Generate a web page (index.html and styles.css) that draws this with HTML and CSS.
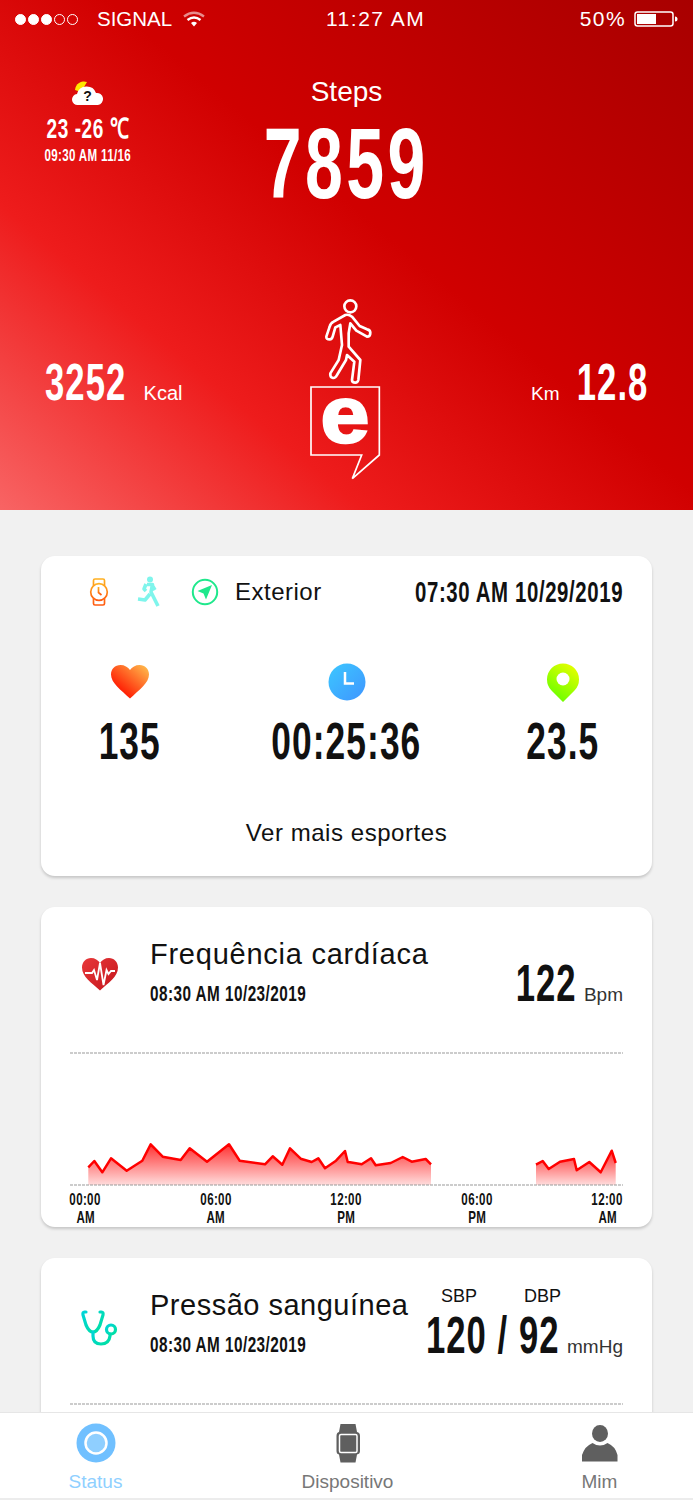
FILE: index.html
```html
<!DOCTYPE html>
<html lang="en">
<head>
    <meta charset="UTF-8">
    <meta name="viewport" content="width=device-width, initial-scale=1.0">
    <title>Status</title>
    <link rel="stylesheet" href="styles.css">
</head>
<body>
<div class="app">
    <section class="hero">
        <div class="statusbar">
            <div class="status-left">
                <div class="dots"><i class="on"></i><i class="on"></i><i class="on"></i><i></i><i></i></div>
                <span class="carrier">SIGNAL</span>
                <svg class="wifi" width="24" height="18" viewBox="0 0 24 18"><path d="M2 6.5Q12 -1 22 6.5" fill="none" stroke="#fff" stroke-opacity=".55" stroke-width="2.4"/><path d="M5.5 10Q12 4.800 18.500 10" fill="none" stroke="#fff" stroke-width="2.400"/><path d="M9 13Q12 10.500 15 13L12 16.500Z" fill="#fff"/></svg>
            </div>
            <span class="clock">11:27 AM</span>
            <div class="status-right">
                <span>50%</span>
                <svg width="44" height="16" viewBox="0 0 44 16"><rect x="1" y="1" width="38" height="14" rx="2.500" fill="none" stroke="#fff" stroke-width="1.500"/><rect x="3" y="3" width="19" height="10" fill="#fff"/><path d="M41 5.500a2.500 2.500 0 0 1 0 5z" fill="#fff"/></svg>
            </div>
        </div>

        <div class="hero-top">
            <div class="weather">
                <svg width="34" height="26" viewBox="0 0 34 26"><path d="M4 10a9 9 0 0 1 12-8L10 12z" fill="#ffe600"/><path d="M7 25a5.500 5.500 0 0 1-1-11 10 10 0 0 1 19-1 6 6 0 0 1 2 12z" fill="#fff"/><text x="16.500" y="21" class="weather-q">?</text></svg>
                <div class="weather-temp"><span class="din">23 -26 ℃</span></div>
                <div class="weather-time"><span class="din">09:30 AM 11/16</span></div>
            </div>
            <div class="steps">
                <div class="steps-label">Steps</div>
                <div class="steps-value"><span class="din">7859</span></div>
            </div>
        </div>

        <div class="hero-bottom">
            <div class="hero-stat">
                <span class="din stat-num left">3252</span>
                <span class="stat-unit kcal">Kcal</span>
            </div>
            <svg class="logo" width="130" height="210" viewBox="5 0 390 630">
                <circle cx="210" cy="79" r="18" fill="none" stroke="#fff" stroke-width="8"/>
                <path d="M195 105L160 125Q150 130 148 140L138 170Q137 178 148 178Q155 178 157 170L165 142L180 135L185 195L175 240L150 280Q148 292 158 294Q165 295 170 285L197 240L200 225L222 245L215 300Q215 308 225 308Q232 308 234 300L240 240L205 200L205 160L210 130L228 152L260 170Q270 170 270 158Q270 150 260 148L238 138L215 110Q205 102 195 105Z" fill="none" stroke="#fff" stroke-width="8" stroke-linejoin="round"/>
                <path d="M92 321H297V525L216 596L244 525H92Z" fill="none" stroke="#fff" stroke-width="5"/>
                <text x="0" y="0" transform="translate(194 487) scale(1.1 1)" class="logo-e">e</text>
            </svg>
            <div class="hero-stat right">
                <span class="stat-unit km">Km</span>
                <span class="din stat-num right-num">12.8</span>
            </div>
        </div>
    </section>

    <main class="content">
        <section class="card sport">
            <div class="sport-head">
                <svg width="20" height="28" viewBox="0 0 20 28"><defs><linearGradient id="watchGrad" x1="0" y1="0" x2="0" y2="1"><stop offset="0" stop-color="#ffb020"/><stop offset="1" stop-color="#ff5a10"/></linearGradient></defs><g fill="none" stroke="url(#watchGrad)" stroke-width="1.700"><circle cx="10" cy="14" r="8.300"/><path d="M4.500 7.500V2.500Q4.500 1 6 1H14Q15.500 1 15.500 2.500V7.500M4.500 20.500V25.500Q4.500 27 6 27H14Q15.500 27 15.500 25.500V20.500"/><path d="M9.500 9V14.500L12.500 17"/></g></svg>
                <svg class="runner" width="24" height="32" viewBox="0 0 24 32"><circle cx="14" cy="3.500" r="3" fill="#7ff5ec"/><path d="M11 8.500L16.500 8.500L15 16L22 30M14 18L9 24L2 23M10 8L8 13L10 15M16 9L19 14" fill="none" stroke="#7ff5ec" stroke-width="3.600" stroke-linejoin="round"/></svg>
                <svg class="compass" width="28" height="28" viewBox="0 0 28 28"><circle cx="14" cy="14" r="12.200" fill="none" stroke="#1fe88c" stroke-width="2"/><path d="M21 7L6.500 13L12.500 15.500L15 21.500Z" fill="#1fe88c"/></svg>
                <span class="sport-type">Exterior</span>
                <span class="sport-date"><span class="din end">07:30 AM 10/29/2019</span></span>
            </div>
            <div class="sport-metrics">
                <div class="metric">
                    <svg width="40" height="40" viewBox="0 0 40 40"><defs><linearGradient id="heartGrad" x1="0" y1="1" x2="1" y2="0"><stop offset=".2" stop-color="#ff1500"/><stop offset="1" stop-color="#ffc450"/></linearGradient></defs><path d="M20 36.500C11 28 1 21 1 12.500C1 7 5 3 10.500 3C14.500 3 18 5 20 8C22 5 25.500 3 29.500 3C35 3 39 7 39 12.500C39 21 29 28 20 36.500Z" fill="url(#heartGrad)"/></svg>
                    <div class="metric-num"><span class="din">135</span></div>
                </div>
                <div class="metric">
                    <svg width="40" height="40" viewBox="0 0 40 40"><defs><linearGradient id="clockGrad" x1="0" y1="0" x2="1" y2="1"><stop offset="0" stop-color="#3cc8ff"/><stop offset="1" stop-color="#3f95ff"/></linearGradient></defs><circle cx="20" cy="20" r="18.500" fill="url(#clockGrad)"/><path d="M18 10V21.500H27" fill="none" stroke="#fff" stroke-width="2.500"/></svg>
                    <div class="metric-num"><span class="din">00:25:36</span></div>
                </div>
                <div class="metric">
                    <svg width="40" height="40" viewBox="0 0 40 40"><defs><linearGradient id="pinGrad" x1=".8" y1="0" x2=".2" y2="1"><stop offset="0" stop-color="#e8ff00"/><stop offset="1" stop-color="#60ff00"/></linearGradient></defs><path d="M20 40L8.500 28.500A16 16 0 1 1 31.500 28.500Z" fill="url(#pinGrad)"/><circle cx="20" cy="17" r="6.500" fill="#fff"/></svg>
                    <div class="metric-num"><span class="din">23.5</span></div>
                </div>
            </div>
            <div class="sport-more">Ver mais esportes</div>
        </section>

        <section class="card health">
            <div class="health-head">
                <div class="health-icon">
                    <svg width="40" height="34" viewBox="0 0 40 34"><defs><linearGradient id="pulseGrad" x1="0" y1="0" x2="1" y2="1"><stop offset="0" stop-color="#e8383a"/><stop offset="1" stop-color="#c4161c"/></linearGradient></defs><path d="M20 33.500C12 26 2 20 2 10.500C2 5 6 1 11 1C15 1 18 3 20 6C22 3 25 1 29 1C34 1 38 5 38 10.500C38 20 28 26 20 33.500Z" fill="url(#pulseGrad)"/><path d="M5 16H12L14 13L17 23L20 6L23.500 28L26.500 13L28.500 17L31 14H35" fill="none" stroke="#fff" stroke-width="1.800"/></svg>
                </div>
                <div class="health-text">
                    <div class="health-title">Frequência cardíaca</div>
                    <div class="health-date"><span class="din start">08:30 AM 10/23/2019</span></div>
                </div>
                <div class="health-value">
                    <span class="din value-num end">122</span>
                    <span class="value-unit">Bpm</span>
                </div>
            </div>
            <div class="chart">
                <svg width="553" height="137" viewBox="0 0 553 137">
                    <defs><linearGradient id="areaGrad" x1="0" y1="0" x2="0" y2="1"><stop offset="0" stop-color="#ff1a1a" stop-opacity=".9"/><stop offset="1" stop-color="#ff1a1a" stop-opacity=".15"/></linearGradient></defs>
                    <line x1="0" y1="3" x2="553" y2="3" class="dash"/>
                    <polygon fill="url(#areaGrad)" points="18.300,135 18.300,117.300 24.300,111 32.300,122.300 41,108.300 56.700,120.700 72.300,110.700 80.700,94.300 92.700,106.700 110.700,110 119.700,98.300 137,111.700 159,94.300 169.700,110.700 195,114.300 202.700,106.300 212.300,114.700 220,98.300 230.700,108.700 241.700,112 248.300,108.300 255,118.300 266,110.700 275,101 277.700,112 280,112.300 291.700,114.300 301,108.300 305.700,115.300 320.700,113 332.700,107 341.700,111.700 355.700,109 361,114.300 361,135"/>
                    <polygon fill="url(#areaGrad)" points="466,135 466,114.700 472.700,111 478.700,119 490,111.700 504,109 506.700,120.300 519.300,112 530.700,122.300 541.700,100.700 545.700,113 545.700,135"/>
                    <line x1="0" y1="135" x2="553" y2="135" class="dash"/>
                    <polyline class="line" points="18.300,117.300 24.300,111 32.300,122.300 41,108.300 56.700,120.700 72.300,110.700 80.700,94.300 92.700,106.700 110.700,110 119.700,98.300 137,111.700 159,94.300 169.700,110.700 195,114.300 202.700,106.300 212.300,114.700 220,98.300 230.700,108.700 241.700,112 248.300,108.300 255,118.300 266,110.700 275,101 277.700,112 280,112.300 291.700,114.300 301,108.300 305.700,115.300 320.700,113 332.700,107 341.700,111.700 355.700,109 361,114.300"/>
                    <polyline class="line" points="466,114.700 472.700,111 478.700,119 490,111.700 504,109 506.700,120.300 519.300,112 530.700,122.300 541.700,100.700 545.700,113"/>
                </svg>
                <div class="axis">
                    <div class="tick"><span class="din">00:00</span><span class="din">AM</span></div>
                    <div class="tick"><span class="din">06:00</span><span class="din">AM</span></div>
                    <div class="tick"><span class="din">12:00</span><span class="din">PM</span></div>
                    <div class="tick"><span class="din">06:00</span><span class="din">PM</span></div>
                    <div class="tick"><span class="din">12:00</span><span class="din">AM</span></div>
                </div>
            </div>
        </section>

        <section class="card health">
            <div class="health-head">
                <div class="health-icon">
                    <svg width="40" height="40" viewBox="0 0 40 40"><defs><linearGradient id="stethGrad" x1="0" y1="0" x2="1" y2="1"><stop offset="0" stop-color="#00d4d8"/><stop offset="1" stop-color="#00e0a0"/></linearGradient></defs><g fill="none" stroke="url(#stethGrad)" stroke-width="3.200" stroke-linecap="round"><path d="M6 4H4.500Q2.500 4 3 7L6 17Q9 24 13 24Q17 24 20 17L23 7Q23.500 4 21.500 4H20"/><path d="M13 24V28Q13 36 21 36Q29 36 30 28V26"/><circle cx="31" cy="21.500" r="4.500"/></g></svg>
                </div>
                <div class="health-text">
                    <div class="health-title short">Pressão sanguínea</div>
                    <div class="health-date"><span class="din start">08:30 AM 10/23/2019</span></div>
                </div>
                <div class="pressure">
                    <div class="pressure-labels"><span>SBP</span><span>DBP</span></div>
                    <div class="health-value">
                        <span class="din value-num end">120 / 92</span>
                        <span class="value-unit">mmHg</span>
                    </div>
                </div>
            </div>
            <div class="chart">
                <svg width="553" height="6" viewBox="0 0 553 6"><line x1="0" y1="3" x2="553" y2="3" class="dash"/></svg>
            </div>
        </section>
    </main>

    <nav class="tabbar">
        <div class="tab active">
            <svg width="40" height="40" viewBox="0 0 40 40"><circle cx="20" cy="20" r="19.500" fill="#70c0ff"/><circle cx="20" cy="20" r="10.500" fill="#8fcfff" stroke="#fff" stroke-width="2.500"/></svg>
            <span>Status</span>
        </div>
        <div class="tab">
            <svg width="40" height="40" viewBox="0 0 40 40"><path d="M12.500 1H27.500L29 9Q32 9.500 32 13V28Q32 31 29 31.500L27.500 39.500H12.500L11 31.500Q8.500 31 8.500 28V13Q8.500 9.500 11 9Z" fill="#5f5f5f"/><rect x="11.500" y="11.500" width="17.500" height="18" rx="1.500" fill="none" stroke="#fff" stroke-width="1.500"/></svg>
            <span>Dispositivo</span>
        </div>
        <div class="tab">
            <svg width="40" height="40" viewBox="0 0 40 40"><ellipse cx="20" cy="10.500" rx="8" ry="8.500" fill="#5f5f5f"/><path d="M2 38.500V32Q5 23 12.500 20Q20 25 27.500 20Q35 23 37.500 32V38.500Z" fill="#5f5f5f"/></svg>
            <span>Mim</span>
        </div>
    </nav>
</div>
</body>
</html>
```

FILE: styles.css
```css
* {
    box-sizing: border-box;
}
body {
    margin: 0;
    font-family: "Liberation Sans", Arial, sans-serif;
    color: #111;
}
svg {
    display: block;
    flex: none;
}
.app {
    width: 693px;
    height: 1500px;
    display: flex;
    flex-direction: column;
    overflow: hidden;
    background-color: #f1f1f1;
}
/* condensed number face, squeezed from the bold */
.din {
    display: inline-block;
    font-family: "Liberation Sans", sans-serif;
    font-weight: bold;
    letter-spacing: 0.03em;
    white-space: nowrap;
    transform: scaleX(0.68);
}
.din.left, .din.start {
    transform-origin: left center;
}
.din.right-num, .din.end {
    transform-origin: right center;
}

.hero {
    flex: none;
    height: 510px;
    color: white;
    background: linear-gradient(40deg, #f86464 0%, #ee1c1c 28%, #d00000 55%, #a80000 100%);
    display: flex;
    flex-direction: column;
}
.statusbar {
    height: 38px;
    display: grid;
    grid-template-columns: 326px auto 1fr;
    align-items: center;
    font-size: 21px;
    padding-right: 15px;
}
.status-left {
    display: flex;
    align-items: center;
    padding-left: 15px;
}
.dots {
    display: flex;
    gap: 2px;
}
.dots i {
    width: 11px;
    height: 11px;
    border: 1px solid white;
    border-radius: 50%;
}
.dots i.on {
    background-color: white;
}
.carrier {
    margin-left: 19px;
    font-size: 20.5px;
}
.wifi {
    margin-left: 10px;
}
.clock {
    letter-spacing: 1.5px;
}
.status-right {
    display: flex;
    justify-content: flex-end;
    align-items: center;
    gap: 8px;
    letter-spacing: 1.4px;
}
.hero-top {
    height: 242px;
    display: grid;
    grid-template-columns: 176px 341px;
    padding-top: 39px;
}
.weather {
    display: flex;
    flex-direction: column;
    align-items: center;
    height: 90px;
    padding-top: 3px;
}
.weather-q {
    font-size: 14px;
    font-weight: bold;
    text-anchor: middle;
    fill: #111;
}
.weather-temp {
    font-size: 28px;
    line-height: 32px;
    margin-top: 7px;
}
.weather-time {
    font-size: 17px;
    line-height: 20px;
    margin-top: 1px;
}
.steps {
    text-align: center;
}
.steps-label {
    font-size: 28px;
    line-height: 30px;
}
.steps-value {
    font-size: 100px;
    line-height: 100px;
    margin-top: 6px;
}
.steps-value .din {
    letter-spacing: 0.05em;
}
.hero-bottom {
    height: 210px;
    display: grid;
    grid-template-columns: minmax(0, 1fr) 130px minmax(0, 1fr);
    padding: 0 45px;
}
.logo {
    justify-self: center;
}
.hero-stat {
    display: flex;
    align-items: baseline;
    padding-top: 73px;
}
.hero-stat.right {
    justify-content: flex-end;
}
.stat-num {
    font-size: 51px;
    line-height: 60px;
}
.stat-unit {
    font-size: 19px;
}
.kcal {
    margin-left: -21px;
    font-size: 20px;
}
.km {
    margin-right: -17px;
}

.content {
    flex: 1;
    overflow: hidden;
    padding: 46px 41px 0;
}
.card {
    background-color: white;
    border-radius: 14px;
    box-shadow: 0 2px 3px rgba(0, 0, 0, 0.18);
    margin-bottom: 31px;
}
.sport {
    height: 320px;
    padding: 18px 29px 0;
}
.sport-head {
    display: flex;
    align-items: center;
    height: 36px;
    padding-left: 19px;
}
.runner {
    margin-left: 27px;
}
.compass {
    margin-left: 31px;
}
.sport-type {
    margin-left: 16px;
    font-size: 24px;
    letter-spacing: 0.5px;
}
.sport-date {
    flex: 1;
    min-width: 0;
    display: flex;
    justify-content: flex-end;
    font-size: 30px;
}
.sport-metrics {
    display: grid;
    grid-template-columns: 176px 1fr 176px;
    margin: 52px -29px 0;
    padding: 0 1px;
}
.metric {
    display: flex;
    flex-direction: column;
    align-items: center;
}
.metric-num {
    font-size: 52px;
    line-height: 60px;
    margin-top: 9px;
}
.sport-more {
    text-align: center;
    font-size: 24px;
    letter-spacing: 0.55px;
    margin-top: 48px;
}
.health {
    height: 320px;
    padding: 29px 29px 0;
}
.health-head {
    display: flex;
    height: 88px;
}
.health-icon {
    flex: none;
    width: 80px;
    padding: 21px 0 0 10px;
}
.health-text {
    flex: 1;
    min-width: 0;
    white-space: nowrap;
}
.health-title {
    font-size: 29px;
    line-height: 36px;
    letter-spacing: 0.75px;
}
.health-title.short {
    letter-spacing: 0.5px;
}
.health-date {
    font-size: 22.5px;
    line-height: 28px;
    margin-top: 8px;
}
.health-value {
    display: flex;
    align-items: baseline;
    justify-content: flex-end;
    gap: 7px;
    margin-top: 18px;
}
.value-num {
    font-size: 51px;
    line-height: 60px;
}
.value-unit {
    font-size: 19px;
    color: #333;
}
.pressure {
    flex: none;
}
.pressure-labels {
    display: flex;
    justify-content: flex-end;
    gap: 47px;
    padding-right: 62px;
    font-size: 18px;
    line-height: 20px;
    margin-top: -1px;
}
.pressure .health-value {
    margin-top: 0;
}
.chart {
    margin: 26px 0 0;
}
.dash {
    stroke: #999;
    stroke-width: 1;
    stroke-dasharray: 3 1;
}
.line {
    fill: none;
    stroke: #ff0000;
    stroke-width: 2.5;
    stroke-linejoin: round;
}
.axis {
    display: flex;
    justify-content: space-between;
    margin-top: 4px;
}
.tick {
    display: flex;
    flex-direction: column;
    align-items: center;
    width: 31px;
    font-size: 17px;
    line-height: 18px;
}

.tabbar {
    flex: none;
    height: 88px;
    background-color: white;
    border-top: 1px solid #e6e6e6;
    border-bottom: 2px solid #ececec;
    display: flex;
    justify-content: space-between;
    padding: 10px 0 0 2px;
}
.tab {
    width: 187px;
    display: flex;
    flex-direction: column;
    align-items: center;
    font-size: 19px;
    color: #777;
}
.tab span {
    margin-top: 8px;
}
.tab.active {
    color: #8fd0ff;
}
.logo-e {
    font-family: "Liberation Sans", sans-serif;
    font-weight: bold;
    font-size: 240px;
    text-anchor: middle;
    fill: white;
    stroke: white;
    stroke-width: 7px;
}
```
